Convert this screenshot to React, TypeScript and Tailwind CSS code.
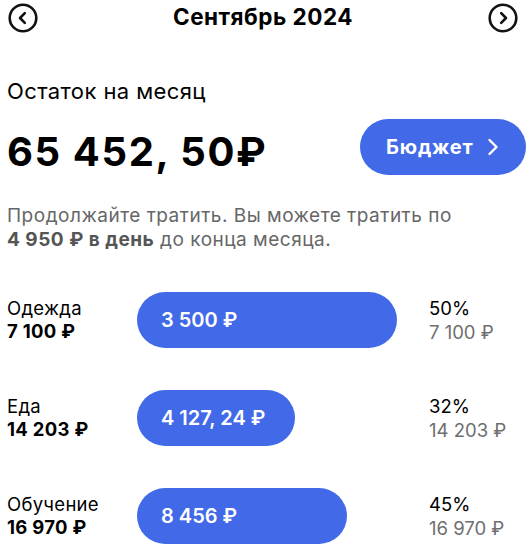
import React from "react";

function CircleChevron({ dir }: { dir: "left" | "right" }) {
  return (
    <svg width="30" height="30" viewBox="0 0 30 30" fill="none">
      <circle cx="15" cy="15" r="13.3" stroke="#111" strokeWidth="2.6" />
      {dir === "left" ? (
        <path d="M16.8 10.2 L12 15 L16.8 19.8" stroke="#111" strokeWidth="2.6" strokeLinecap="round" strokeLinejoin="round" />
      ) : (
        <path d="M13.2 10.2 L18 15 L13.2 19.8" stroke="#111" strokeWidth="2.6" strokeLinecap="round" strokeLinejoin="round" />
      )}
    </svg>
  );
}

const rows = [
  { name: "Одежда", total: "7 100 ₽", spent: "3 500 ₽", pct: "50%", w: 260 },
  { name: "Еда", total: "14 203 ₽", spent: "4 127, 24 ₽", pct: "32%", w: 158 },
  { name: "Обучение", total: "16 970 ₽", spent: "8 456 ₽", pct: "45%", w: 210 },
];

export default function App() {
  return (
    <div className="w-[530px] h-[548px] overflow-hidden bg-white text-black font-['Inter',sans-serif]">
      <div className="flex items-center justify-between pl-[8px] pr-[12px] pt-[2px] h-[34px]">
        <CircleChevron dir="left" />
        <div className="text-[22.5px] font-bold leading-none tracking-[0.5px] pb-[1px]">Сентябрь 2024</div>
        <CircleChevron dir="right" />
      </div>

      <div className="px-[7px] mt-[44px] text-[22px] leading-[26px] tracking-[0.4px]">Остаток на месяц</div>

      <div className="flex items-center justify-between pl-[7px] pr-[4px] mt-[15px]">
        <div className="text-[40px] font-bold leading-none tracking-[1.6px] pt-[9px]">65 452, 50₽</div>
        <button className="h-[56px] w-[166px] rounded-full bg-[#4169e8] text-white flex items-center pl-[26px] gap-[14px]">
          <span className="text-[20px] font-bold tracking-[0.8px]">Бюджет</span>
          <svg width="12" height="18" viewBox="0 0 12 18" fill="none">
            <path d="M2.5 2 L9.5 9 L2.5 16" stroke="white" strokeWidth="2.4" strokeLinecap="round" strokeLinejoin="round" />
          </svg>
        </button>
      </div>

      <p className="px-[7px] mt-[29px] text-[19px] leading-[24px] tracking-[0.5px] text-[#666]">
        Продолжайте тратить. Вы можете тратить по
        <br />
        <span className="font-bold text-[#555]">4 950 ₽ в день</span> до конца месяца.
      </p>

      <div className="mt-[40px] flex flex-col gap-[42px]">
        {rows.map((r) => (
          <div key={r.name} className="grid grid-cols-[130px_292px_1fr] items-center pl-[7px]">
            <div className="flex flex-col tracking-[0.3px]">
              <span className="text-[18.5px] leading-[23px]">{r.name}</span>
              <span className="text-[18.5px] leading-[23px] font-bold">{r.total}</span>
            </div>
            <div>
              <div
                className="h-[56px] rounded-full bg-[#4169e8] text-white flex items-center pl-[24px]"
                style={{ width: r.w }}
              >
                <span className="text-[20px] font-semibold">{r.spent}</span>
              </div>
            </div>
            <div className="flex flex-col">
              <span className="text-[18.5px] leading-[24px]">{r.pct}</span>
              <span className="text-[18.5px] leading-[24px] text-[#6e6e6e]">{r.total}</span>
            </div>
          </div>
        ))}
      </div>
    </div>
  );
}
